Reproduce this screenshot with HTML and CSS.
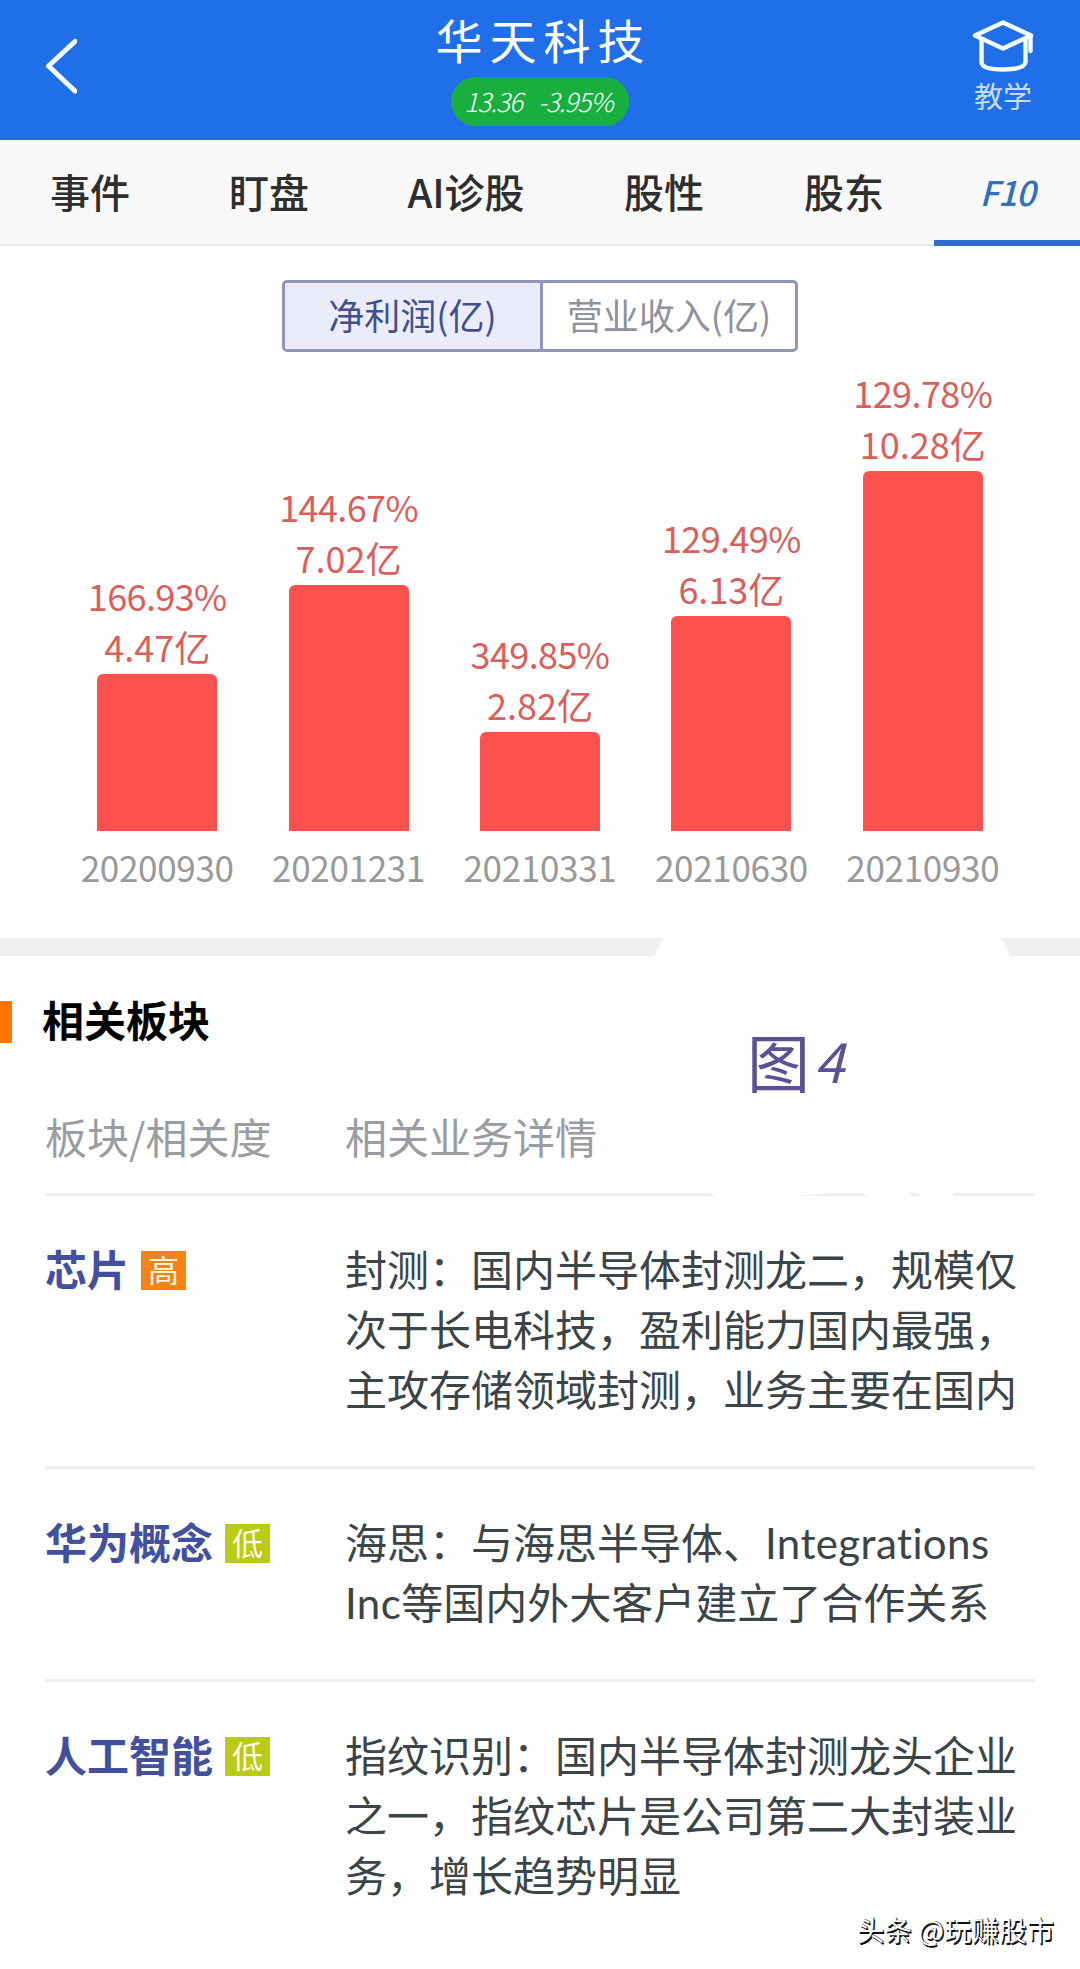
FILE: index.html
```html
<!DOCTYPE html>
<html lang="zh-CN">
<head>
<meta charset="utf-8">
<title>华天科技</title>
<link rel="stylesheet" href="styles.css">
</head>
<body>
<div class="app">
  <header class="topbar">
    <svg class="back" width="32" height="56" viewBox="0 0 32 56"><path d="M30 3.500 3.500 28 30 53"/></svg>
    <div class="stock">
      <h1 class="stock-name">华天科技</h1>
      <div class="quote"><span class="price">13.36</span><span class="change">-3.95%</span></div>
    </div>
    <div class="lesson">
      <svg class="cap" width="64" height="54" viewBox="0 0 64 54">
        <path d="M32 4.500 60 17.500 32 30.500 4 17.500Z"/>
        <path d="M10.500 22V44Q10.500 51.500 32 51.500T54.500 44V22"/>
        <path d="M59.500 18V33"/>
      </svg>
      <span>教学</span>
    </div>
  </header>

  <nav class="tabs">
    <a class="tab">事件</a>
    <a class="tab">盯盘</a>
    <a class="tab">AI诊股</a>
    <a class="tab">股性</a>
    <a class="tab">股东</a>
    <a class="tab active">F10</a>
  </nav>

  <section class="finance">
    <div class="switch">
      <button class="option selected">净利润(亿)</button>
      <button class="option">营业收入(亿)</button>
    </div>
    <div class="chart">
      <div class="col"><p class="value"><span class="rate">166.93%</span><br>4.47亿</p><div class="bar" style="height:157px"></div><p class="date">20200930</p></div>
      <div class="col"><p class="value"><span class="rate">144.67%</span><br>7.02亿</p><div class="bar" style="height:246px"></div><p class="date">20201231</p></div>
      <div class="col"><p class="value"><span class="rate">349.85%</span><br>2.82亿</p><div class="bar" style="height:99px"></div><p class="date">20210331</p></div>
      <div class="col"><p class="value"><span class="rate">129.49%</span><br>6.13亿</p><div class="bar" style="height:215px"></div><p class="date">20210630</p></div>
      <div class="col"><p class="value"><span class="rate">129.78%</span><br>10.28亿</p><div class="bar" style="height:360px"></div><p class="date">20210930</p></div>
    </div>
  </section>

  <svg class="band" width="1080" height="18" viewBox="0 0 1080 18">
    <path d="M0 0H664Q659 6 657 13L654 18H0ZM1000 0H1080V18H1010L1006 8Q1004 3 1000 0Z"/>
  </svg>

  <section class="related">
    <h2 class="section-title">相关板块</h2>
    <div class="note"><span class="note-char">图</span><span class="note-num">4</span></div>
    <div class="row head"><span>板块/相关度</span><span>相关业务详情</span></div>
    <svg class="head-line" width="990" height="3" viewBox="0 0 990 3">
      <path d="M0 0H664L671 3H0ZM748 3 790 0H817L824 3ZM865 0H871L875 3H865ZM909 0H990V3H909Z"/>
    </svg>
    <div class="row">
      <div class="topic"><b>芯片</b><i class="level high">高</i></div>
      <p class="detail">封测：国内半导体封测龙二，规模仅<br>次于长电科技，盈利能力国内最强，<br>主攻存储领域封测，业务主要在国内</p>
    </div>
    <div class="row">
      <div class="topic"><b>华为概念</b><i class="level low">低</i></div>
      <p class="detail">海思：与海思半导体、<span class="latin">Integrations</span><br><span class="latin">Inc</span>等国内外大客户建立了合作关系</p>
    </div>
    <div class="row">
      <div class="topic"><b>人工智能</b><i class="level low">低</i></div>
      <p class="detail">指纹识别：国内半导体封测龙头企业<br>之一，指纹芯片是公司第二大封装业<br>务，增长趋势明显</p>
    </div>
  </section>
  <div class="watermark">头条 @玩赚股市</div>
</div>
</body>
</html>
```
FILE: styles.css
```css
* { box-sizing: border-box; }
body, h1, h2, p { margin: 0; }
body {
  background: #fefefe;
  font-family: "Noto Sans CJK SC", sans-serif;
  color: #3b4547;
}
.app { position: relative; width: 1080px; height: 1969px; overflow: hidden; }

.topbar {
  display: grid;
  grid-template-columns: 180px 1fr 180px;
  height: 140px;
  background: #216fe8;
  color: #fff;
}
.back { margin: 38px 0 0 45px; }
.back path, .cap path {
  fill: none;
  stroke: #f4ffff;
  stroke-width: 5;
  stroke-linecap: round;
  stroke-linejoin: round;
}
.cap path { stroke-width: 4.4; }
.stock { display: flex; flex-direction: column; align-items: center; padding-top: 9px; }
.stock-name {
  font-size: 47px;
  font-weight: 400;
  line-height: 60px;
  letter-spacing: 7px;
  margin-right: -7px;
  margin-bottom: 8px;
}
.quote {
  display: flex;
  align-items: center;
  justify-content: center;
  gap: 16px;
  width: 178px;
  height: 49px;
  padding: 0 3px 3px 0;
  border-radius: 25px;
  background: #18af3f;
  font-size: 26px;
  font-style: italic;
  font-weight: 300;
  letter-spacing: -.9px;
}
.lesson {
  display: flex;
  flex-direction: column;
  align-items: center;
  padding: 18px 0 0 26px;
  font-size: 29px;
  line-height: 40px;
  color: #c5def8;
}
.lesson span { margin-top: 3px; }

.tabs {
  display: grid;
  grid-template-columns: 180px 178px 216px 180px 180px 146px;
  height: 106px;
  background: #f8f8f8;
  border-bottom: 2px solid #e8e8e8;
}
.tab {
  display: flex;
  align-items: center;
  justify-content: center;
  margin-bottom: -2px;
  padding-bottom: 5px;
  font-size: 40px;
  font-weight: 500;
  color: #2e2e2e;
}
.tab.active {
  padding: 2px 0 0;
  border-bottom: 6px solid #2d6ccb;
  font-size: 34px;
  font-style: italic;
  letter-spacing: -1px;
  color: #3070bd;
}

.finance { height: 692px; padding-top: 34px; }
.switch {
  display: grid;
  grid-template-columns: 258px 1fr;
  width: 516px;
  height: 72px;
  margin: 0 auto;
  border: 3px solid #9196b9;
  border-radius: 5px;
  overflow: hidden;
}
.option {
  border: 0;
  padding: 0 0 4px;
  background: none;
  font: 36px/1 "Noto Sans CJK SC", sans-serif;
  color: #8f919c;
}
.option.selected { background: #ebecfa; color: #40508f; border-right: 3px solid #9196b9; }
.chart {
  display: grid;
  grid-template-columns: repeat(5, 191.4px);
  justify-content: center;
  align-items: end;
  height: 546px;
}
.col { display: flex; flex-direction: column; align-items: center; }
.value {
  padding-bottom: 2.5px;
  font-size: 36px;
  line-height: 51px;
  text-align: center;
  color: #d95f5c;
}
.rate { letter-spacing: -.6px; }
.bar { width: 120px; border-radius: 6px 6px 0 0; background: #ff524f; }
.date { height: 67px; padding-top: 9.5px; font-size: 35px; line-height: 52px; letter-spacing: -.3px; color: #999; }

.band { display: block; fill: #efefef; }
.related { position: relative; padding: 33px 45px 0; }
.section-title {
  margin-left: -45px;
  padding-left: 42px;
  font-size: 42px;
  font-weight: 700;
  line-height: 60px;
  color: #000;
  background: linear-gradient(#ff7500, #ff7500) 0 12px / 12px 42px no-repeat;
}
.note { position: absolute; left: 747px; top: 62px; display: flex; align-items: center; color: #5c5096; line-height: 84px; }
.note-char { font-size: 63px; font-weight: 400; }
.note-num { font-size: 54px; font-style: italic; margin-left: 4px; }
.row {
  display: grid;
  grid-template-columns: 300px 1fr;
  padding: 42px 0 48px;
  font-size: 42px;
  line-height: 60px;
  border-bottom: 3px solid #efefef;
  white-space: nowrap;
}
.row:last-child { border-bottom: 0; }
.row.head { padding: 57px 0 27px; border: 0; color: #999da1; }
.head-line { display: block; fill: #efefef; }
.topic { display: flex; align-items: center; gap: 12px; height: 60px; color: #4250a0; }
.level {
  width: 45px;
  height: 39px;
  margin-top: 5px;
  font-size: 31px;
  font-style: normal;
  line-height: 35px;
  text-align: center;
  color: #fff8e8;
}
.high { background: #f38312; }
.low { background: #b9cb14; }
.latin {
  font-family: Lato, "Noto Sans CJK SC", sans-serif;
  font-size: 42px;
  line-height: 0;
  letter-spacing: .4px;
  font-variant-ligatures: none;
}
.watermark {
  position: absolute;
  right: 26px;
  bottom: 20px;
  font-size: 27.5px;
  line-height: 40px;
  color: #fff;
  text-shadow: 1.500px 1.500px 0 #111, 1px 0 0 #222;
}
```
